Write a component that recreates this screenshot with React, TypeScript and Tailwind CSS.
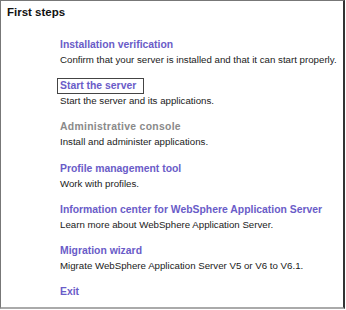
const items = [
  {
    title: "Installation verification",
    desc: "Confirm that your server is installed and that it can start properly.",
  },
  {
    title: "Start the server",
    desc: "Start the server and its applications.",
    focused: true,
  },
  {
    title: "Administrative console",
    desc: "Install and administer applications.",
    disabled: true,
  },
  { title: "Profile management tool", desc: "Work with profiles." },
  {
    title: "Information center for WebSphere Application Server",
    desc: "Learn more about WebSphere Application Server.",
  },
  {
    title: "Migration wizard",
    desc: "Migrate WebSphere Application Server V5 or V6 to V6.1.",
  },
  { title: "Exit" },
];

export default function App() {
  return (
    <div className="w-[346px] h-[310px] bg-white font-['Liberation_Sans',Arial,sans-serif]">
      <div className="w-[345px] h-[309px] border-t border-l border-[#777] border-r-2 border-r-[#333] border-b-2 border-b-[#aaa] box-border">
        <h1 className="pl-[6px] pt-[4px] text-[11.5px] leading-[14px] font-bold text-[#111]">
          First steps
        </h1>
        <ul className="pl-[59px] pt-[18px] flex flex-col gap-[11.2px]">
          {items.map((item) => (
            <li key={item.title} className="flex flex-col items-start">
              <span
                className={
                  item.focused
                    ? "border border-[#444] pl-[2px] pr-[7px] -ml-[3px] leading-[14px] text-[10.4px] font-bold text-[#6a5cc8]"
                    : item.disabled
                    ? "leading-[16px] text-[10.4px] font-bold text-[#8a8a8a] tracking-[0.3px]"
                    : "leading-[16px] text-[10.4px] font-bold text-[#6a5cc8]"
                }
              >
                {item.title}
              </span>
              {item.desc && (
                <span className="leading-[14px] text-[9.7px] text-[#1a1a1a]">
                  {item.desc}
                </span>
              )}
            </li>
          ))}
        </ul>
      </div>
    </div>
  );
}
